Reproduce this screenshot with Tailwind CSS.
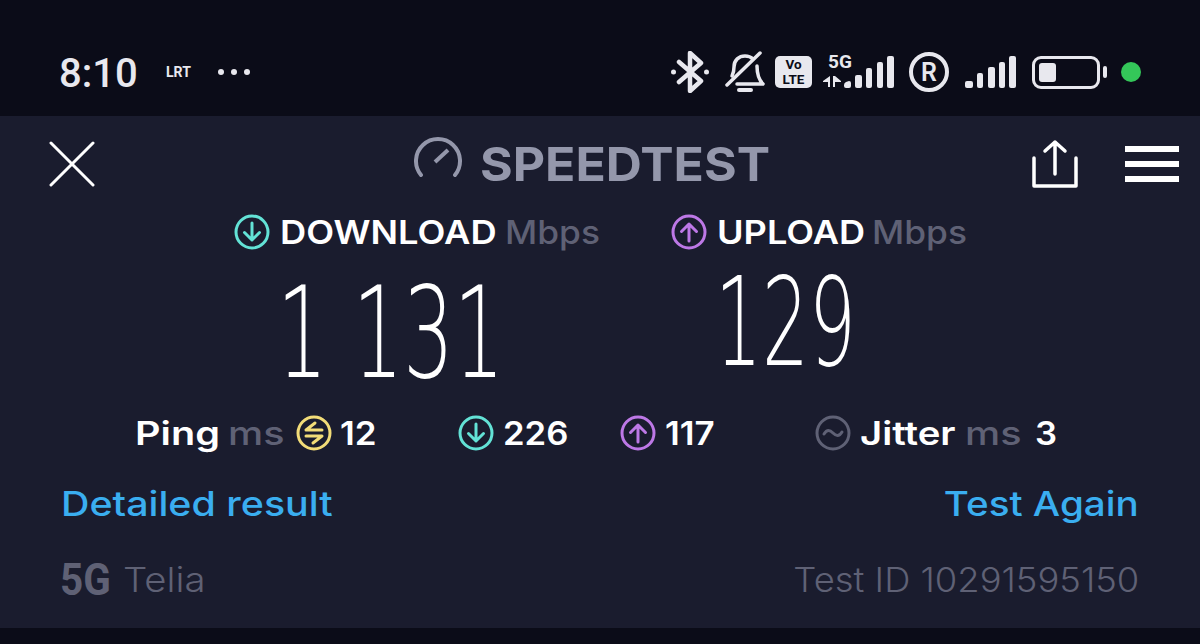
<!DOCTYPE html>
<html lang="en">
  <head>
    <meta charset="UTF-8" />
    <meta name="viewport" content="width=device-width, initial-scale=1.0" />
    <title>Speedtest result</title>
    <script src="https://cdn.jsdelivr.net/npm/@tailwindcss/browser@4"></script>
  </head>
  <body class="w-[1200px] h-[644px] overflow-hidden bg-[#0b0c18] font-['Inter',sans-serif]">
    <!-- Phone status bar -->
    <div class="h-[116px] pt-[28px] flex items-center text-[#e8e8ee]">
      <div class="ml-[59px] mt-[3px] w-[107px] text-[40px] font-['Roboto',sans-serif] font-medium leading-none">8:10</div>
      <div class="w-[52px] text-[14px] font-['Roboto',sans-serif] font-bold leading-none">LRT</div>
      <div class="flex gap-[7px]">
        <span class="w-[6px] h-[6px] rounded-full bg-[#e8e8ee]"></span>
        <span class="w-[6px] h-[6px] rounded-full bg-[#e8e8ee]"></span>
        <span class="w-[6px] h-[6px] rounded-full bg-[#e8e8ee]"></span>
      </div>
      <div class="ml-[421px] flex items-center">
        <!-- bluetooth -->
        <svg width="38" height="42" viewBox="0 0 38 42" fill="none" stroke="#e8e8ee" stroke-width="4.500" stroke-linecap="round" stroke-linejoin="round">
          <path d="M8 11 L30 30 L19 40 V2 L30 12 L8 31" />
          <circle cx="2.500" cy="21" r="2.500" fill="#e8e8ee" stroke="none" />
          <circle cx="35.500" cy="21" r="2.500" fill="#e8e8ee" stroke="none" />
        </svg>
        <!-- muted bell -->
        <svg class="ml-[16px]" width="40" height="42" viewBox="0 0 40 42" fill="none" stroke="#e8e8ee" stroke-width="3.500" stroke-linecap="round" stroke-linejoin="round">
          <path d="M7 25 C9 21 9 19 9 16 C9 9 14 5 20 5 C23 5 26 6 28 8" />
          <path d="M32 15 C32 24 34 29 38 33 H12" />
          <path d="M35 2 L2 34" />
          <path d="M14 39 H26" stroke-width="4" />
        </svg>
        <!-- VoLTE badge -->
        <div class="ml-[10px] w-[37px] h-[32px] rounded-[5px] bg-[#e8e8ee] flex flex-col items-center justify-center text-[#0b0c18] text-[13.500px] leading-[15px] font-bold font-['Roboto',sans-serif]">
          <span>Vo</span><span>LTE</span>
        </div>
        <!-- 5G with signal -->
        <div class="ml-[11px] relative w-[71px] h-[34px]">
          <span class="absolute left-[5px] -top-[3px] text-[19px] leading-[20px] font-bold font-['Roboto',sans-serif]">5G</span>
          <svg class="absolute left-0 top-0" width="71" height="34" viewBox="0 0 71 34" fill="#e8e8ee">
            <path d="M0 26 L7 21 V32 H5 V27 H0 Z M10 21 H12 L18 26 V27 H12 V32 H10 Z" />
            <path d="M21 30 Q21 28 23 27 L26 26 Q28 26 28 28 V31 Q28 33 26 33 H23 Q21 33 21 31 Z" />
            <rect x="32" y="20" width="7" height="13" rx="2" />
            <rect x="43" y="13" width="6" height="20" rx="2" />
            <rect x="54" y="7" width="6" height="26" rx="2" />
            <rect x="64" y="1" width="7" height="32" rx="2" />
          </svg>
        </div>
        <!-- roaming -->
        <div class="ml-[15px] w-[40px] h-[40px] rounded-full border-[4px] border-[#e8e8ee] flex items-center justify-center text-[25px] font-semibold font-['Roboto',sans-serif] leading-none">R</div>
        <!-- signal -->
        <svg class="ml-[16px]" width="51" height="34" viewBox="0 0 51 34" fill="#e8e8ee">
          <rect x="0" y="26" width="8" height="7" rx="2" />
          <rect x="12" y="18" width="6" height="15" rx="2" />
          <rect x="23" y="12" width="7" height="21" rx="2" />
          <rect x="34" y="7" width="6" height="26" rx="2" />
          <rect x="44" y="1" width="7" height="32" rx="2" />
        </svg>
        <!-- battery -->
        <div class="ml-[16px] w-[68px] h-[33px] rounded-[9px] border-[3px] border-[#e8e8ee] p-[4px]">
          <div class="w-[17px] h-full rounded-[3px] bg-[#e8e8ee]"></div>
        </div>
        <div class="ml-[3px] w-[4px] h-[12px] rounded-full bg-[#e8e8ee]"></div>
        <div class="ml-[14px] w-[20px] h-[20px] rounded-full bg-[#34c759]"></div>
      </div>
    </div>

    <!-- Result panel -->
    <div class="h-[512px] bg-[#1a1c2e]">
      <!-- Toolbar -->
      <div class="h-[82px] pt-[13px] flex items-center">
        <svg class="ml-[49px]" width="46" height="46" viewBox="0 0 46 46" fill="none" stroke="#fff" stroke-width="3" stroke-linecap="round">
          <path d="M2 2 L44 44 M44 2 L2 44" />
        </svg>
        <svg class="ml-[319px] mb-[12px]" width="50" height="44" viewBox="0 0 50 44" fill="none" stroke="#9497ab" stroke-width="4" stroke-linecap="round">
          <path d="M7 39 A22 22 0 1 1 41 39" />
          <path d="M21 26 L34 14" stroke-linecap="butt" />
        </svg>
        <div class="ml-[16px] w-[288px] text-[47px] leading-none font-bold text-[#9497ab] origin-left scale-x-[1.063]">SPEEDTEST</div>
        <svg class="ml-[264px]" width="46" height="50" viewBox="0 0 46 50" fill="none" stroke="#fff" stroke-width="3.500" stroke-linecap="round" stroke-linejoin="round">
          <path d="M2 19 V47 H44 V19" />
          <path d="M23 35 V3 M13 12 L23 3 L33 12" />
        </svg>
        <div class="ml-[47px] w-[54px] flex flex-col gap-[9px]">
          <span class="h-[6px] bg-white"></span>
          <span class="h-[6px] bg-white"></span>
          <span class="h-[6px] bg-white"></span>
        </div>
      </div>

      <!-- Download and upload -->
      <div class="h-[68px] pl-[234px] flex items-center text-[33px] leading-none">
        <div class="w-[437px] flex items-center">
          <svg width="36" height="36" viewBox="0 0 36 36" fill="none" stroke="#63e2d6" stroke-width="3" stroke-linecap="round" stroke-linejoin="round">
            <circle cx="18" cy="18" r="16" />
            <path d="M18 9 V26 M10.500 18.500 L18 26 L25.500 18.500" />
          </svg>
          <span class="ml-[10px] w-[225px] font-semibold text-white origin-left scale-x-[1.1]">DOWNLOAD</span>
          <span class="font-medium text-[#5f6175] origin-left scale-x-[1.07]">Mbps</span>
        </div>
        <div class="flex items-center">
          <svg width="36" height="36" viewBox="0 0 36 36" fill="none" stroke="#bd78e6" stroke-width="3" stroke-linecap="round" stroke-linejoin="round">
            <circle cx="18" cy="18" r="16" />
            <path d="M18 27 V10 M10.500 17.500 L18 10 L25.500 17.500" />
          </svg>
          <span class="ml-[10px] w-[155px] font-semibold text-white origin-left scale-x-[1.095]">UPLOAD</span>
          <span class="font-medium text-[#5f6175] origin-left scale-x-[1.07]">Mbps</span>
        </div>
      </div>

      <!-- Big numbers -->
      <div class="h-[134px] flex text-white font-['DejaVu_Sans',sans-serif] font-extralight">
        <div class="ml-[277px] mt-[17px] w-[438px] h-[100px] text-[127px] leading-[100px] origin-left scale-x-[0.625] whitespace-nowrap">1 131</div>
        <div class="mt-[7px] h-[100px] text-[123px] leading-[100px] origin-left scale-x-[0.6]">129</div>
      </div>

      <!-- Ping, jitter -->
      <div class="h-[66px] flex items-center text-[33px] font-semibold text-white leading-none">
        <span class="ml-[135px] w-[93px] origin-left scale-x-[1.2]">Ping</span>
        <span class="w-[68px] font-medium text-[#5f6175] origin-left scale-x-[1.2]">ms</span>
        <svg width="36" height="36" viewBox="0 0 36 36" fill="none" stroke="#f2dc78" stroke-width="3" stroke-linecap="round" stroke-linejoin="round">
          <circle cx="18" cy="18" r="16" />
          <path d="M26 15 H10 L19 8 M10 21 H26 L17 28" />
        </svg>
        <span class="ml-[8px] w-[118px] origin-left scale-x-[1.06]">12</span>
        <svg width="36" height="36" viewBox="0 0 36 36" fill="none" stroke="#63e2d6" stroke-width="3" stroke-linecap="round" stroke-linejoin="round">
          <circle cx="18" cy="18" r="16" />
          <path d="M18 9 V26 M10.500 18.500 L18 26 L25.500 18.500" />
        </svg>
        <span class="ml-[9px] w-[117px] origin-left scale-x-[1.05]">226</span>
        <svg width="36" height="36" viewBox="0 0 36 36" fill="none" stroke="#bd78e6" stroke-width="3" stroke-linecap="round" stroke-linejoin="round">
          <circle cx="18" cy="18" r="16" />
          <path d="M18 27 V10 M10.500 17.500 L18 10 L25.500 17.500" />
        </svg>
        <span class="ml-[9px] w-[150px] origin-left scale-x-[1.06]">117</span>
        <svg width="36" height="36" viewBox="0 0 36 36" fill="none" stroke="#5f6175" stroke-width="3" stroke-linecap="round">
          <circle cx="18" cy="18" r="16" />
          <path d="M9 19 C12 14 15 15 18 18 C21 21 24 22 27 17" />
        </svg>
        <span class="ml-[9px] w-[105px] origin-left scale-x-[1.16]">Jitter</span>
        <span class="w-[70px] font-medium text-[#5f6175] origin-left scale-x-[1.2]">ms</span>
        <span class="origin-left scale-x-[1.05]">3</span>
      </div>

      <!-- Links -->
      <div class="h-[74px] pt-[2px] pl-[61px] pr-[61px] flex items-center justify-between text-[34px] font-medium text-[#3aaef0] leading-none">
        <span class="origin-left scale-x-[1.158]">Detailed result</span>
        <span class="origin-right scale-x-[1.135]">Test Again</span>
      </div>

      <!-- Connection -->
      <div class="h-[80px] pl-[60px] pr-[61px] flex items-center text-[34px] text-[#5f6175] leading-none">
        <span class="w-[63px] origin-left scale-x-[0.92] font-['Roboto',sans-serif] font-bold text-[44px]">5G</span>
        <span class="font-light origin-left scale-x-[1.127]">Telia</span>
        <span class="ml-auto font-light origin-right scale-x-[1.07]">Test ID 10291595150</span>
      </div>
    </div>
  </body>
</html>
